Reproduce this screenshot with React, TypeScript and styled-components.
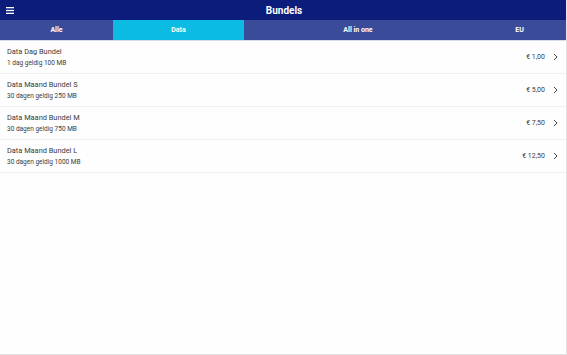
import React from "react";
import styled, { createGlobalStyle } from "styled-components";

const GlobalStyle = createGlobalStyle`
  html, body {
    margin: 0;
    padding: 0;
    background: #ffffff;
    font-family: Roboto, "Liberation Sans", sans-serif;
  }
`;

const Screen = styled.div`
  width: 567px;
  height: 355px;
  display: flex;
  flex-direction: column;
  background: #fefefe;
  border-right: 1px solid #e4e4e4;
  border-bottom: 1px solid #e0e0e0;
  box-sizing: border-box;
  overflow: hidden;
`;

const TopBar = styled.div`
  height: 20px;
  background: #0b1c7b;
  display: flex;
  align-items: center;
`;

const MenuButton = styled.div`
  width: 20px;
  height: 20px;
  display: flex;
  align-items: center;
  justify-content: center;
`;

const Title = styled.div`
  flex: 1;
  text-align: center;
  color: #ffffff;
  font-weight: 700;
  font-size: 10px;
  margin-right: 18px;
`;

const TabBar = styled.div`
  height: 20px;
  display: flex;
  background: #3a4b99;
  border-bottom: 1px solid #d6dcef;
`;

const Tab = styled.div<{ $w: number; $active?: boolean }>`
  width: ${(p) => p.$w}px;
  flex-shrink: 0;
  display: flex;
  align-items: center;
  justify-content: center;
  color: #ffffff;
  font-size: 7px;
  font-weight: 700;
  background: ${(p) => (p.$active ? "#0bbbe2" : "transparent")};
`;

const List = styled.div`
  display: flex;
  flex-direction: column;
`;

const Row = styled.div`
  height: 33px;
  box-sizing: border-box;
  display: flex;
  align-items: center;
  padding: 0 7px;
  border-bottom: 1px solid #efefef;
`;

const Info = styled.div`
  flex: 1;
  display: flex;
  flex-direction: column;
  gap: 3px;
`;

const Name = styled.div`
  font-size: 7.4px;
  color: #3a3a3a;
`;

const Detail = styled.div`
  font-size: 6.5px;
  color: #3a3a3a;
`;

const Price = styled.div`
  font-size: 7px;
  color: #3a3a3a;
  margin-right: 7px;
`;

const Chevron = () => (
  <svg width="7" height="8" viewBox="0 0 7 8">
    <path d="M2 1 L5 4 L2 7" fill="none" stroke="#444" strokeWidth="1" />
  </svg>
);

const bundles = [
  { name: "Data Dag Bundel", detail: "1 dag geldig 100 MB", price: "€ 1,00" },
  { name: "Data Maand Bundel S", detail: "30 dagen geldig 250 MB", price: "€ 5,00" },
  { name: "Data Maand Bundel M", detail: "30 dagen geldig 750 MB", price: "€ 7,50" },
  { name: "Data Maand Bundel L", detail: "30 dagen geldig 1000 MB", price: "€ 12,50" },
];

export default function App() {
  return (
    <>
      <GlobalStyle />
      <Screen>
        <TopBar>
          <MenuButton>
            <svg width="8" height="7" viewBox="0 0 8 7">
              <rect x="0" y="0" width="8" height="1.3" fill="#fff" />
              <rect x="0" y="2.85" width="8" height="1.3" fill="#fff" />
              <rect x="0" y="5.7" width="8" height="1.3" fill="#fff" />
            </svg>
          </MenuButton>
          <Title>Bundels</Title>
        </TopBar>
        <TabBar>
          <Tab $w={113}>Alle</Tab>
          <Tab $w={131} $active>Data</Tab>
          <Tab $w={228}>All in one</Tab>
          <Tab $w={95}>EU</Tab>
        </TabBar>
        <List>
          {bundles.map((b) => (
            <Row key={b.name}>
              <Info>
                <Name>{b.name}</Name>
                <Detail>{b.detail}</Detail>
              </Info>
              <Price>{b.price}</Price>
              <Chevron />
            </Row>
          ))}
        </List>
      </Screen>
    </>
  );
}
